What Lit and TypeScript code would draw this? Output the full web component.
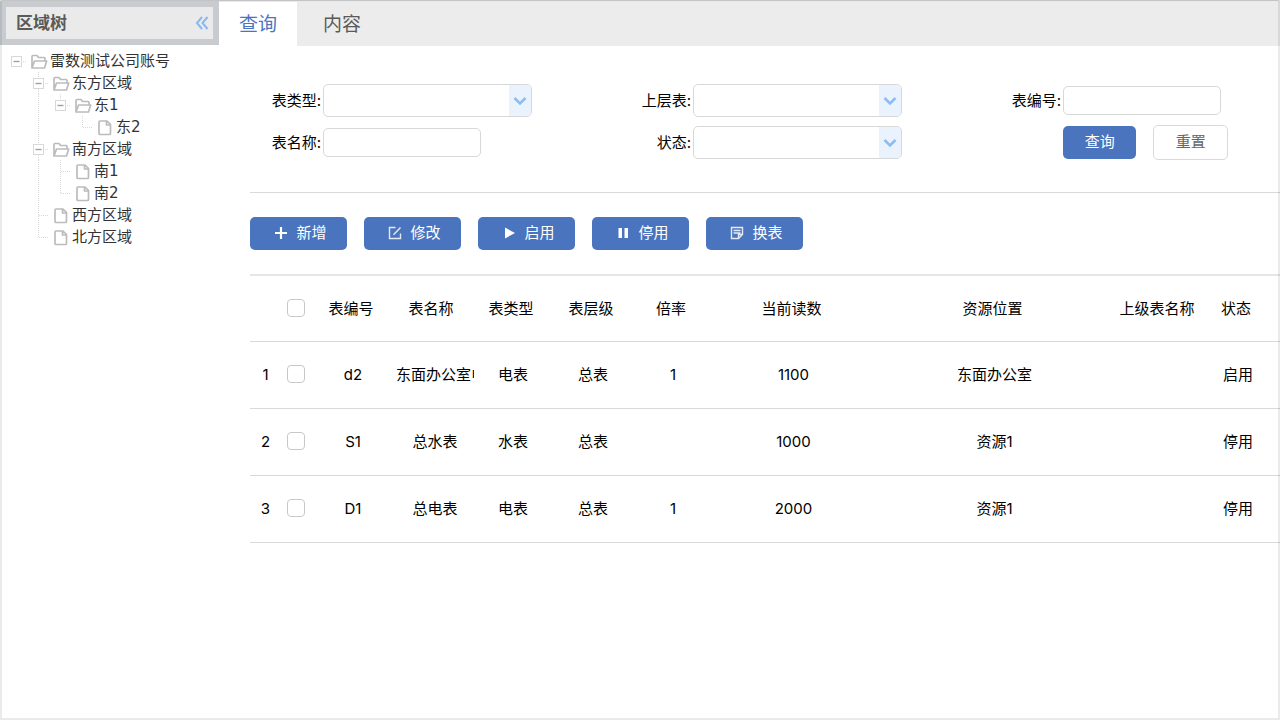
import { LitElement, html, css, svg, nothing } from "lit";
import { customElement } from "lit/decorators.js";

type Cell = "blank" | "line" | "tee" | "elbow" | "root" | "mid" | "last";

interface TreeRow {
  cells: Cell[];
  folder: boolean;
  text: string;
}

const TREE: TreeRow[] = [
  { cells: ["root"], folder: true, text: "雷数测试公司账号" },
  { cells: ["blank", "mid"], folder: true, text: "东方区域" },
  { cells: ["blank", "line", "last"], folder: true, text: "东1" },
  { cells: ["blank", "line", "blank", "elbow"], folder: false, text: "东2" },
  { cells: ["blank", "mid"], folder: true, text: "南方区域" },
  { cells: ["blank", "line", "tee"], folder: false, text: "南1" },
  { cells: ["blank", "line", "elbow"], folder: false, text: "南2" },
  { cells: ["blank", "tee"], folder: false, text: "西方区域" },
  { cells: ["blank", "elbow"], folder: false, text: "北方区域" },
];

const GUIDES: Record<Cell, string> = {
  blank: "",
  line: "M10.5 0V22",
  tee: "M10.5 0V22M11 11.5H21",
  elbow: "M10.5 0V11.5M11 11.5H21",
  root: "M17 11.5H21",
  mid: "M10.5 0V6M10.5 17V22M17 11.5H21",
  last: "M10.5 0V6M17 11.5H21",
};

@customElement("region-tree")
export class RegionTree extends LitElement {
  static styles = css`
    :host {
      display: block;
      padding: 5px 0 0 6px;
      font: 15px/22px "DejaVu Sans", "Noto Sans CJK SC", sans-serif;
      color: #333;
    }
    .tree {
      list-style: none;
      margin: 0;
      padding: 0;
    }
    .row {
      display: flex;
      height: 22px;
      white-space: nowrap;
    }
    .cell {
      flex: none;
      display: block;
      width: 22px;
      height: 22px;
      fill: none;
    }
    .guide {
      stroke: #d8d8d8;
      stroke-dasharray: 1 1;
    }
    .box {
      stroke: #d8d8d8;
      fill: #fff;
    }
    .minus {
      stroke: #a0a0a0;
      stroke-width: 1.4;
    }
    .icon {
      stroke: #bcbcbc;
      stroke-width: 1.7;
      stroke-linejoin: round;
    }
  `;

  private cell(kind: Cell) {
    const open = kind === "root" || kind === "mid" || kind === "last";
    return html`<svg class="cell" viewBox="0 0 22 22" aria-hidden="true">
      <path class="guide" d=${GUIDES[kind]} />
      ${open
        ? svg`<rect class="box" x="5.5" y="6.5" width="10" height="10" /><path class="minus" d="M7.5 11.5H13.5" />`
        : nothing}
    </svg>`;
  }

  private icon(folder: boolean) {
    return html`<svg class="cell" viewBox="0 0 22 22" aria-hidden="true">
      ${folder
        ? svg`<path class="icon" d="M4 18V6.500Q4 5.500 5 5.500H9L10.500 7.500H16Q17 7.500 17 8.500V11M4 18L6.500 11H18.700L16.500 18Z" />`
        : svg`<path class="icon" d="M6 5H13L16.500 8.500V17.500Q16.500 18.500 15.500 18.500H6Q5 18.500 5 17.500V6Q5 5 6 5M12.500 5V9H16.500" />`}
    </svg>`;
  }

  render() {
    return html`<ul class="tree" role="tree">
      ${TREE.map(
        (r) => html`<li class="row" role="treeitem" aria-level=${r.cells.length}>
          ${r.cells.map((c) => this.cell(c))}${this.icon(r.folder)}<span>${r.text}</span>
        </li>`
      )}
    </ul>`;
  }
}

const ICONS = {
  add: svg`<path d="M7 1V13M1 7H13" stroke="currentColor" stroke-width="2.2" fill="none" />`,
  edit: svg`<path d="M7.500 1.500H1.500V12.500H12.500V7.500M5.500 8.800L12.500 1.500" stroke="currentColor" stroke-width="1.400" fill="none" opacity=".85" />`,
  play: svg`<path d="M3 1.500L13 7L3 12.500Z" fill="currentColor" />`,
  pause: svg`<path d="M2.500 2H6V12H2.500ZM8.500 2H12V12H8.500Z" fill="currentColor" />`,
  note: svg`<path d="M1.500 1.500H12.500V8.500L8.500 12.500H1.500ZM8.500 12V8.500H12M3.500 4.500H10.500M3.500 7H10.500" stroke="currentColor" stroke-width="1.400" fill="none" opacity=".85" />`,
};

const ACTIONS: { icon: keyof typeof ICONS; text: string }[] = [
  { icon: "add", text: "新增" },
  { icon: "edit", text: "修改" },
  { icon: "play", text: "启用" },
  { icon: "pause", text: "停用" },
  { icon: "note", text: "换表" },
];

const HEADERS = ["表编号", "表名称", "表类型", "表层级", "倍率", "当前读数", "资源位置", "上级表名称", "状态"];

const ROWS = [
  ["d2", "东面办公室电", "电表", "总表", "1", "1100", "东面办公室", "", "启用"],
  ["S1", "总水表", "水表", "总表", "", "1000", "资源1", "", "停用"],
  ["D1", "总电表", "电表", "总表", "1", "2000", "资源1", "", "停用"],
];

@customElement("app-root")
export class AppRoot extends LitElement {
  static styles = css`
    :host {
      display: block;
      font: 15px/22px Inter, "Noto Sans CJK SC", sans-serif;
      color: #000;
    }
    * {
      box-sizing: border-box;
    }
    .page {
      position: relative;
      display: flex;
      min-height: 100vh;
      padding-top: 1px;
      background: #fff;
      overflow: hidden;
    }
    .frame {
      position: absolute;
      inset: 0;
      border: 2px solid rgba(0, 0, 0, 0.08);
      border-top: 1px solid #c4c4c4;
      pointer-events: none;
    }
    .side {
      flex: none;
      width: 219px;
    }
    .side-head {
      display: flex;
      align-items: center;
      justify-content: space-between;
      height: 44px;
      border: 6px solid #c8ccd1;
      background: #eaeaea;
      padding: 0 4px 0 10px;
    }
    .side-title {
      margin: 0;
      font-size: 17px;
      line-height: 24px;
      font-weight: 700;
      color: #5a5a5a;
    }
    .collapse {
      display: flex;
      padding: 0;
      border: 0;
      background: none;
      color: #8cb8ee;
    }
    .main {
      flex: 1;
      min-width: 0;
    }
    .tabs {
      display: flex;
      height: 45px;
      background: #ececec;
      border-top: 1px solid #eaeaea;
    }
    .tab {
      padding: 2px 20px 0;
      border: 0;
      background: none;
      font: inherit;
      font-size: 19px;
      color: #5a5a5a;
    }
    .tab.active {
      background: #fff;
      color: #4a74be;
    }
    .tab + .tab {
      padding: 2px 26px 0;
    }
    .content {
      padding-left: 31px;
    }
    .form {
      display: grid;
      grid-template-columns: 36% 36% 28%;
      grid-auto-rows: 33px;
      row-gap: 9px;
      padding: 38px 2px 33px 0;
      border-bottom: 1px solid #d9d9d9;
    }
    .field {
      display: flex;
      align-items: center;
    }
    .label {
      flex: none;
      width: 71px;
      margin-right: 2px;
      text-align: right;
      white-space: nowrap;
    }
    .text,
    .select {
      border: 1px solid #d8d8d8;
      border-radius: 5px;
      background: #fff;
      font: inherit;
    }
    .text {
      width: 158px;
      height: 29px;
      padding: 0 6px;
    }
    .combo {
      display: grid;
      width: 209px;
      height: 33px;
    }
    .combo > * {
      grid-area: 1 / 1;
    }
    .select {
      appearance: none;
      width: 100%;
      padding: 0 28px 0 6px;
    }
    .arrow {
      justify-self: end;
      display: flex;
      align-items: center;
      justify-content: center;
      width: 22px;
      margin: 1px;
      border-radius: 0 4px 4px 0;
      background: #eaf2fe;
      color: #8cbcf0;
      pointer-events: none;
    }
    .buttons {
      display: flex;
      align-items: center;
      gap: 17px;
      padding-left: 73px;
    }
    .btn {
      display: flex;
      flex: none;
      align-items: center;
      justify-content: center;
      height: 33px;
      padding: 0 0 2px;
      border: 0;
      border-radius: 5px;
      background: #4a74be;
      color: #fff;
      font: inherit;
    }
    .query {
      width: 73px;
    }
    .reset {
      width: 75px;
      height: 35px;
      border: 1px solid #d9d9d9;
      background: #fff;
      color: #666;
    }
    .actions {
      display: flex;
      gap: 17px;
      padding: 24px 0;
    }
    .action {
      width: 97px;
      gap: 8px;
      padding-left: 4px;
    }
    .glyph {
      width: 14px;
      height: 14px;
    }
    .grid {
      width: 100%;
      table-layout: fixed;
      border-collapse: separate;
      border-spacing: 0;
      border-top: 2px solid #e6e6e6;
    }
    .w-num { width: 31px; }
    .w-check { width: 30px; }
    .w-s { width: 80px; }
    .w-read { width: 161px; }
    .w-place { width: 241px; }
    .w-parent { width: 88px; }
    .w-state { width: 79px; }
    .grid th,
    .grid td {
      height: 67px;
      padding: 0;
      border-bottom: 1px solid #d9d9d9;
      font-weight: 400;
      text-align: center;
      white-space: nowrap;
    }
    .grid th {
      height: 66px;
    }
    .grid td {
      padding-left: 4px;
    }
    .grid .pick {
      padding: 0 0 2px;
    }
    .grid th:last-child,
    .grid td:last-child {
      padding-right: 9px;
    }
    .grid .num {
      padding: 0;
    }
    .name {
      margin: 0 -3px 0 1px;
      overflow: hidden;
    }
    .check {
      appearance: none;
      display: block;
      width: 18px;
      height: 18px;
      margin: 0 auto;
      border: 1px solid #c8c8c8;
      border-radius: 4px;
      background: #fff;
    }
  `;

  private selectField(id: string, label: string) {
    return html`<div class="field">
      <label class="label" for=${id}>${label}:</label>
      <div class="combo">
        <select class="select" id=${id}><option></option></select>
        <span class="arrow">
          <svg width="14" height="10" viewBox="0 0 14 10" aria-hidden="true">
            <path d="M1.500 2L7 7.500L12.500 2" fill="none" stroke="currentColor" stroke-width="2.500" />
          </svg>
        </span>
      </div>
    </div>`;
  }

  private textField(id: string, label: string) {
    return html`<div class="field">
      <label class="label" for=${id}>${label}:</label>
      <input class="text" id=${id} type="text" />
    </div>`;
  }

  render() {
    return html`<div class="page">
      <aside class="side">
        <div class="side-head">
          <h1 class="side-title">区域树</h1>
          <button class="collapse" aria-label="收起">
            <svg width="14" height="14" viewBox="0 0 14 14" aria-hidden="true">
              <path d="M7 1L2 7L7 13M12.500 1L7.500 7L12.500 13" fill="none" stroke="currentColor" stroke-width="2" />
            </svg>
          </button>
        </div>
        <region-tree></region-tree>
      </aside>
      <main class="main">
        <div class="tabs" role="tablist">
          <button class="tab active" role="tab" aria-selected="true">查询</button>
          <button class="tab" role="tab" aria-selected="false">内容</button>
        </div>
        <div class="content">
          <form class="form">
            ${this.selectField("type", "表类型")} ${this.selectField("upper", "上层表")}
            ${this.textField("code", "表编号")} ${this.textField("name", "表名称")}
            ${this.selectField("state", "状态")}
            <div class="buttons">
              <button class="btn query" type="button">查询</button>
              <button class="btn reset" type="reset">重置</button>
            </div>
          </form>
          <div class="actions">
            ${ACTIONS.map(
              (a) => html`<button class="btn action">
                <svg class="glyph" viewBox="0 0 14 14" aria-hidden="true">${ICONS[a.icon]}</svg>${a.text}
              </button>`
            )}
          </div>
          <table class="grid">
            <colgroup>
              <col class="w-num" /><col class="w-check" />
              <col class="w-s" /><col class="w-s" /><col class="w-s" /><col class="w-s" /><col class="w-s" />
              <col class="w-read" /><col class="w-place" /><col class="w-parent" /><col class="w-state" />
            </colgroup>
            <thead>
              <tr>
                <th></th>
                <th class="pick"><input class="check" type="checkbox" aria-label="全选" /></th>
                ${HEADERS.map((h) => html`<th scope="col">${h}</th>`)}
              </tr>
            </thead>
            <tbody>
              ${ROWS.map(
                (r, i) => html`<tr>
                  <td class="num">${i + 1}</td>
                  <td class="pick"><input class="check" type="checkbox" aria-label=${r[1]} /></td>
                  ${r.map((c, k) => html`<td>${k === 1 ? html`<div class="name">${c}</div>` : c}</td>`)}
                </tr>`
              )}
            </tbody>
          </table>
        </div>
      </main>
      <div class="frame"></div>
    </div>`;
  }
}
